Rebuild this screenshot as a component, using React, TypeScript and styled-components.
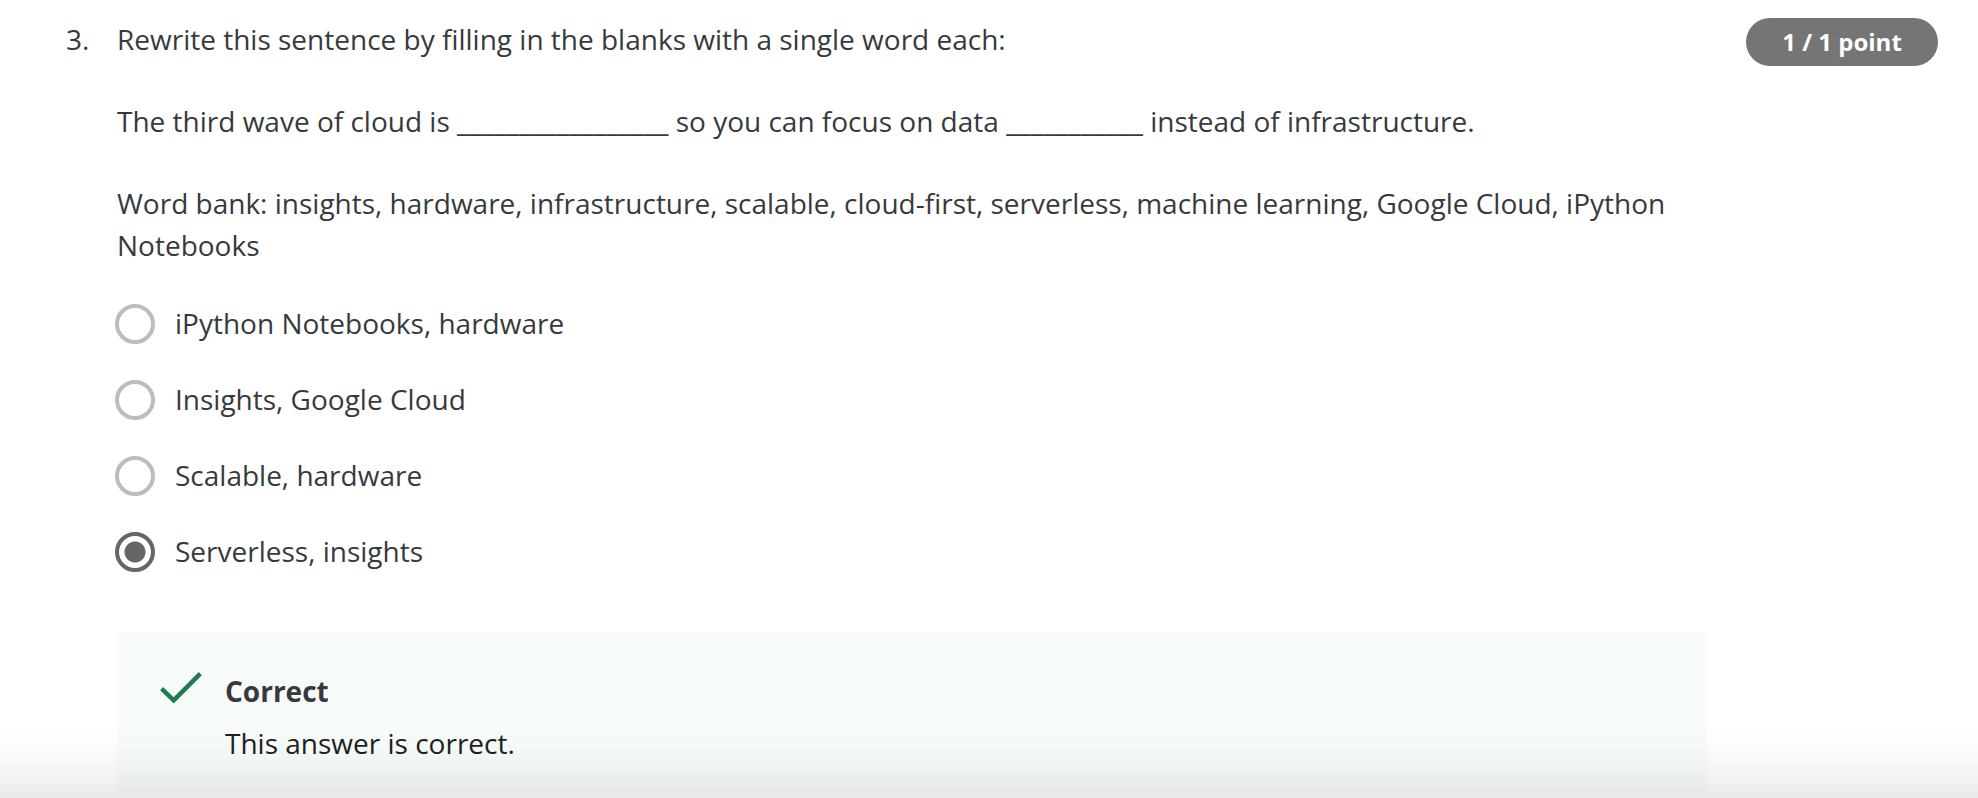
import React, { useState } from "react";
import styled, { createGlobalStyle } from "styled-components";

const GlobalStyle = createGlobalStyle`
  * { box-sizing: border-box; }
  body {
    margin: 0;
    background: #fff;
    color: #373a3c;
    font-family: "Open Sans", "Noto Sans", sans-serif;
    font-size: 28px;
    line-height: 42px;
  }
`;

const Question = styled.main`
  display: flex;
  align-items: flex-start;
  min-height: 100vh;
  padding: 18px 40px 6px 66px;
`;

const QuestionNumber = styled.div`
  flex: 0 0 51px;
`;

const QuestionBody = styled.form`
  flex: 1;
  min-width: 0;
`;

const Prompt = styled.div`
  display: flex;
  flex-direction: column;
  gap: 40px;
`;

const Paragraph = styled.p`
  margin: 0;
`;

const Blank = styled.span`
  font-family: "Noto Sans", sans-serif;
  line-height: 1;
`;

const Points = styled.div`
  flex: none;
  min-width: 192px;
  margin-left: 39px;
  padding: 0 36px;
  border-radius: 24px;
  background: #757575;
  color: #fff;
  font-size: 24px;
  font-weight: 700;
  line-height: 48px;
  text-align: center;
`;

const Options = styled.fieldset`
  display: flex;
  flex-direction: column;
  align-items: flex-start;
  gap: 34px;
  margin: 36px 0 60px -2px;
  padding: 0;
  border: 0;
`;

const Option = styled.label`
  display: flex;
  align-items: flex-end;
  gap: 20px;
  cursor: pointer;
`;

const Radio = styled.input`
  appearance: none;
  flex: none;
  width: 40px;
  height: 40px;
  margin: 0;
  border: 4px solid #bdbdbd;
  border-radius: 50%;
  background: #fff;
  cursor: pointer;

  &:checked {
    border-color: #666;
    background: radial-gradient(circle, #666 10px, #fff 11px);
  }
`;

const Feedback = styled.section`
  display: flex;
  gap: 22px;
  padding: 38px 42px 28px;
  background: #f7fbf9;
`;

const CheckIcon = styled.svg`
  flex: none;
  width: 44px;
  height: 36px;
`;

const FeedbackText = styled.div`
  display: flex;
  flex-direction: column;
  gap: 10px;
`;

const FeedbackTitle = styled.h2`
  margin: 0;
  font-size: 28px;
  font-weight: 700;
  line-height: 42px;
`;

const FeedbackMessage = styled.p`
  margin: 0;
  color: #1f1f1f;
`;

const BottomShade = styled.div`
  position: fixed;
  right: 0;
  bottom: 0;
  left: 0;
  height: 72px;
  background: linear-gradient(
    to bottom,
    rgba(0, 0, 0, 0),
    rgba(0, 0, 0, 0.012) 30%,
    rgba(0, 0, 0, 0.04) 65%,
    rgba(0, 0, 0, 0.085)
  );
  pointer-events: none;
`;

const answers = [
  "iPython Notebooks, hardware",
  "Insights, Google Cloud",
  "Scalable, hardware",
  "Serverless, insights",
];

export default function App() {
  const [selected, setSelected] = useState(answers[3]);

  return (
    <>
      <GlobalStyle />
      <Question>
        <QuestionNumber>3.</QuestionNumber>
        <QuestionBody>
          <Prompt id="prompt">
            <Paragraph>
              Rewrite this sentence by filling in the blanks with a single word each:
            </Paragraph>
            <Paragraph>
              The third wave of cloud is <Blank>{"_".repeat(17)}</Blank> so you can focus
              on data <Blank>{"_".repeat(11)}</Blank> instead of infrastructure.
            </Paragraph>
            <Paragraph>
              Word bank: insights, hardware, infrastructure, scalable, cloud-first,
              serverless, machine learning, Google Cloud, iPython Notebooks
            </Paragraph>
          </Prompt>
          <Options aria-labelledby="prompt">
            {answers.map((answer) => (
              <Option key={answer}>
                <Radio
                  type="radio"
                  name="answer"
                  value={answer}
                  checked={selected === answer}
                  onChange={() => setSelected(answer)}
                />
                <span>{answer}</span>
              </Option>
            ))}
          </Options>
          <Feedback>
            <CheckIcon viewBox="0 0 44 36" fill="none" aria-hidden="true">
              <path d="M2.6 18.6 14.7 30.3 41.3 3.6" stroke="#1d7c50" strokeWidth="4.4" />
            </CheckIcon>
            <FeedbackText>
              <FeedbackTitle>Correct</FeedbackTitle>
              <FeedbackMessage>This answer is correct.</FeedbackMessage>
            </FeedbackText>
          </Feedback>
        </QuestionBody>
        <Points>1 / 1 point</Points>
      </Question>
      <BottomShade />
    </>
  );
}
